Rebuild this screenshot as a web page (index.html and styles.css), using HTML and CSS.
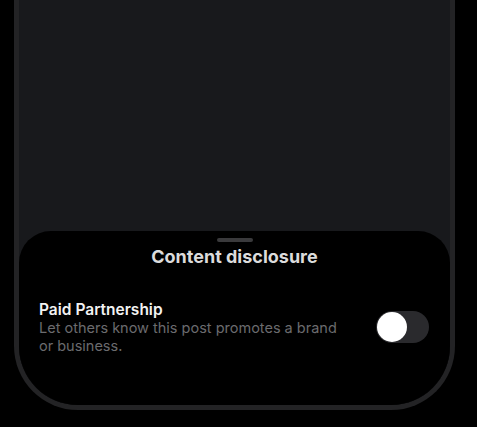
FILE: index.html
```html
<!DOCTYPE html>
<html>
	<head>
		<meta charset="UTF-8">
		<title>Content disclosure</title>
		<link rel="stylesheet" href="styles.css">
	</head>
	<body>
		<div class="phone">
			<div class="screen">
				<div class="backdrop"></div>
				<div class="sheet">
					<div class="handle"></div>
					<div class="title">Content disclosure</div>
					<div class="row">
						<div class="row-text">
							<div class="row-title">Paid Partnership</div>
							<div class="row-desc">Let others know this post promotes a brand or business.</div>
						</div>
						<div class="switch"><span class="knob"></span></div>
					</div>
				</div>
			</div>
		</div>
	</body>
</html>
```

FILE: styles.css
```css
* {
	margin: 0;
	padding: 0;
	box-sizing: border-box;
}

body {
	background: #000;
	font-family: Inter, "Liberation Sans", sans-serif;
	color: #fff;
}

.phone {
	width: 441px;
	height: 410px;
	margin-left: 14px;
	border: 5px solid #232325;
	border-top: none;
	border-radius: 0 0 64px 64px;
	overflow: hidden;
}

.screen {
	height: 100%;
	display: flex;
	flex-direction: column;
	background: #18191c;
}

.backdrop {
	flex: 1;
}

.sheet {
	height: 174px;
	background: #000;
	border-radius: 32px 32px 0 0;
	padding: 7px 20px 0;
	display: flex;
	flex-direction: column;
	align-items: center;
}

.handle {
	width: 36px;
	height: 4px;
	border-radius: 2px;
	background: #3a3a3c;
}

.title {
	margin-top: 3px;
	font-size: 18px;
	line-height: 24px;
	font-weight: 700;
	color: #dcdcdc;
}

.row {
	align-self: stretch;
	margin-top: 31px;
	display: flex;
	align-items: center;
	justify-content: space-between;
}

.row-text {
	width: 310px;
}

.row-title {
	font-size: 15.5px;
	line-height: 19px;
	font-weight: 600;
	color: #f2f2f2;
}

.row-desc {
	font-size: 14.5px;
	line-height: 17.5px;
	color: #6b6b6e;
}

.switch {
	width: 53px;
	height: 32px;
	border-radius: 16px;
	background: #2a2a2d;
	padding: 1px;
	margin-right: 1px;
}

.knob {
	display: block;
	width: 30px;
	height: 30px;
	border-radius: 50%;
	background: #fff;
}
```
